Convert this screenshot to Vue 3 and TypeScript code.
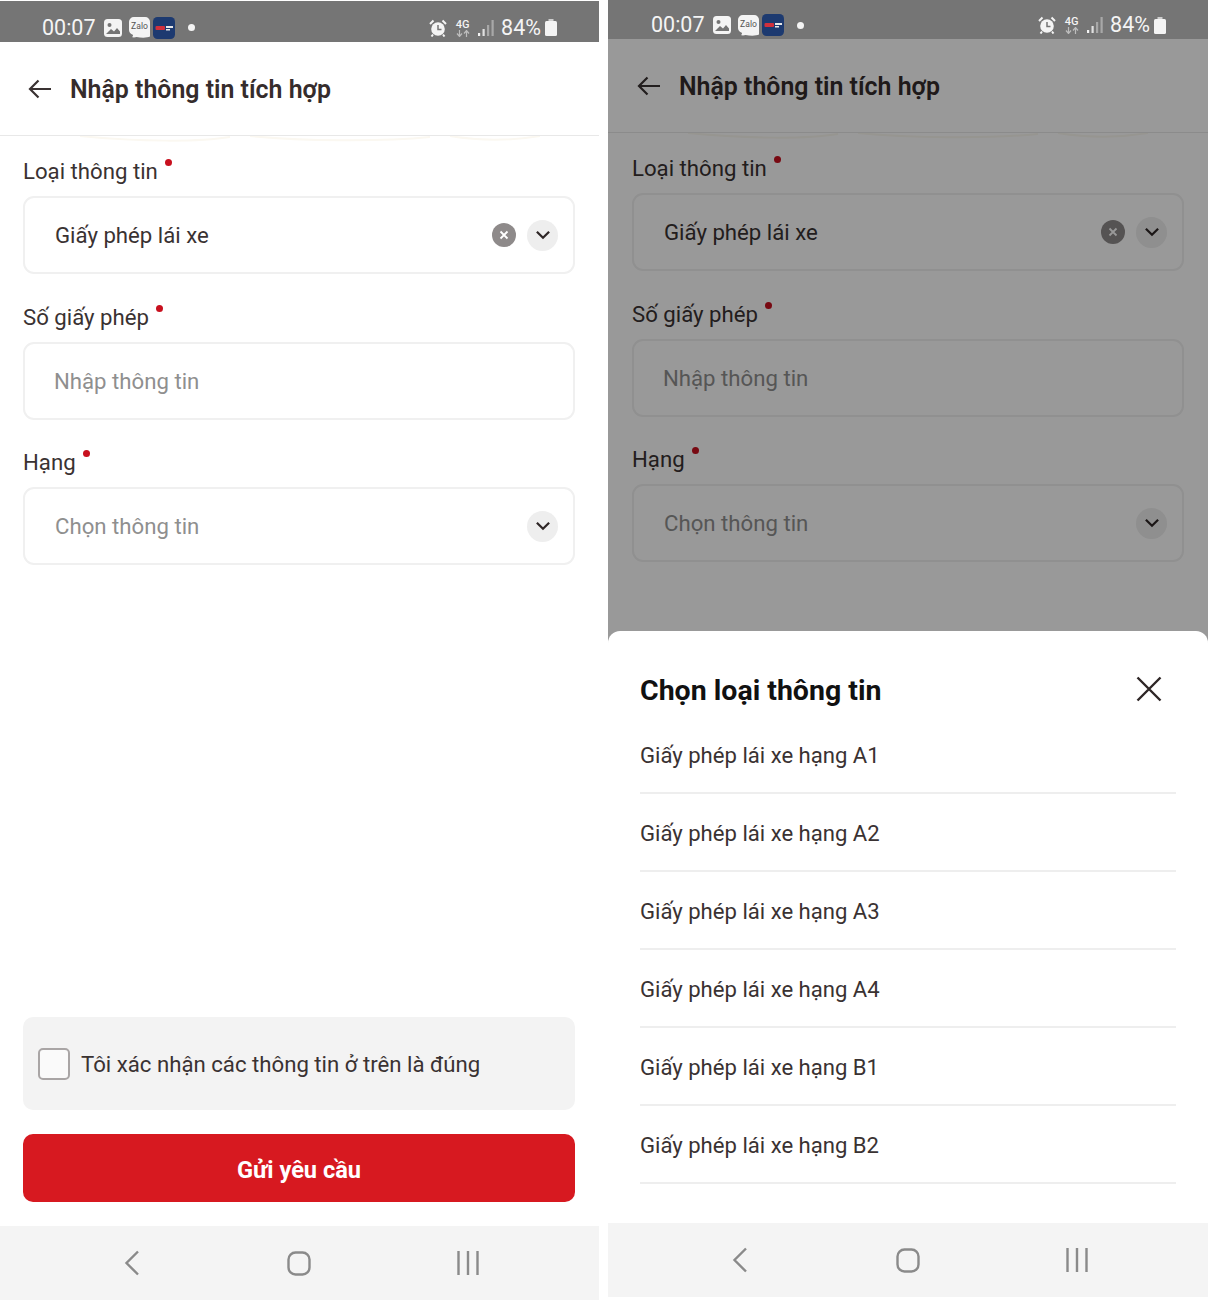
<script setup lang="ts">
const phones = [
  { id: 'form', showSheet: false },
  { id: 'sheet', showSheet: true },
]

const licenceOptions = ['A1', 'A2', 'A3', 'A4', 'B1', 'B2']
</script>

<template>
  <div class="page">
    <div
      v-for="phone in phones"
      :key="phone.id"
      class="phone"
      :class="{ '_with-sheet': phone.showSheet }"
    >
      <div class="status">
        <div class="status__side">
          <span class="status__time">00:07</span>
          <svg class="status__gallery" viewBox="0 0 18 18">
            <rect x="0" y="0" width="18" height="18" rx="3.5" fill="#f4f4f4" />
            <circle cx="5.5" cy="6" r="2" fill="#757575" />
            <path d="M2 15l5-5 3 2.5 3-3.5 3 3.5V15z" fill="#757575" />
          </svg>
          <svg class="status__zalo" viewBox="0 0 22 22">
            <path d="M5 0h12a5 5 0 0 1 5 5v15.500c-3 1.500-9 1.500-14 .5-2 .5-4 .5-5 0 1-.5 1.500-1.500 1-2.500A5 5 0 0 1 0 14V5a5 5 0 0 1 5-5z" fill="#f4f4f4" />
            <text x="11" y="13" class="status__zalo-text" text-anchor="middle">Zalo</text>
          </svg>
          <svg class="status__app" viewBox="0 0 22 22">
            <rect width="22" height="22" rx="4.5" fill="#1d3a70" />
            <rect x="2.500" y="9" width="9.500" height="4" rx="1" fill="#d1303c" />
            <rect x="13" y="9" width="7" height="2" fill="#e8e8e8" />
            <rect x="13" y="12" width="4" height="1.500" fill="#e8e8e8" />
          </svg>
          <span class="status__dot"></span>
        </div>
        <div class="status__side">
          <svg class="status__alarm" viewBox="0 0 18 18">
            <circle cx="9" cy="10" r="6.800" fill="#f4f4f4" />
            <path d="M9 6v4.500h3.500" fill="none" stroke="#757575" stroke-width="1.500" />
            <path d="M1 5l3.500-3.500M17 5l-3.500-3.500M4 15.500l-1.500 2M14 15.500l1.500 2" stroke="#f4f4f4" stroke-width="2" />
          </svg>
          <div class="status__network">
            <span>4G</span>
            <svg viewBox="0 0 14 7">
              <path d="M3.500 0v6M1 3.500L3.500 6.500 6 3.500" fill="none" stroke="#bdbdbd" stroke-width="1.200" />
              <path d="M10.500 7V1M8 3.500L10.500.5 13 3.500" fill="none" stroke="#bdbdbd" stroke-width="1.200" />
            </svg>
          </div>
          <svg class="status__signal" viewBox="0 0 16 16">
            <rect x="0" y="13" width="2.200" height="3" fill="#f4f4f4" />
            <rect x="4.500" y="9" width="2.200" height="7" fill="#e0e0e0" />
            <rect x="9" y="5" width="2.200" height="11" fill="#a8a8a8" />
            <rect x="13.500" y="0" width="2.200" height="16" fill="#a8a8a8" />
          </svg>
          <span class="status__percent">84%</span>
          <svg class="status__battery" viewBox="0 0 12 17">
            <rect x="3.500" y="0" width="5" height="2" fill="#cfcfcf" />
            <rect x="0" y="2" width="12" height="15" rx="1.500" fill="#f4f4f4" />
          </svg>
        </div>
      </div>

      <div class="main">
        <header class="header">
          <svg class="header__back" viewBox="0 0 24 20">
            <path d="M23 10H2M10.500 1.500L2 10l8.500 8.500" fill="none" stroke="#3a3232" stroke-width="2.200" />
          </svg>
          <h1 class="header__title">Nhập thông tin tích hợp</h1>
        </header>

        <div class="content">
          <svg class="content__decor" viewBox="0 0 460 10">
            <path d="M0 0c60 6 120 6 150 1M170 0c50 5 130 6 180 1M370 0c30 5 60 5 90 0" fill="none" stroke="#fbf8f1" stroke-width="2" />
          </svg>

          <div class="form">
            <div class="field">
              <label class="field__label">Loại thông tin<i class="field__required"></i></label>
              <div class="field__box">
                <span class="field__value">Giấy phép lái xe</span>
                <span class="field__clear">
                  <svg viewBox="0 0 10 10">
                    <path d="M1.500 1.500l7 7M8.500 1.500l-7 7" stroke="#fff" stroke-width="1.800" />
                  </svg>
                </span>
                <span class="field__toggle">
                  <svg viewBox="0 0 14 9">
                    <path d="M1.500 1.500L7 7l5.500-5.500" fill="none" stroke="#2e2626" stroke-width="2" />
                  </svg>
                </span>
              </div>
            </div>
            <div class="field">
              <label class="field__label">Số giấy phép<i class="field__required"></i></label>
              <div class="field__box _input">
                <span class="field__placeholder">Nhập thông tin</span>
              </div>
            </div>
            <div class="field">
              <label class="field__label">Hạng<i class="field__required"></i></label>
              <div class="field__box">
                <span class="field__placeholder">Chọn thông tin</span>
                <span class="field__toggle">
                  <svg viewBox="0 0 14 9">
                    <path d="M1.500 1.500L7 7l5.500-5.500" fill="none" stroke="#2e2626" stroke-width="2" />
                  </svg>
                </span>
              </div>
            </div>
          </div>

          <template v-if="!phone.showSheet">
            <div class="confirm">
              <span class="confirm__check"></span>
              <span class="confirm__text">Tôi xác nhận các thông tin ở trên là đúng</span>
            </div>
            <button class="submit" type="button">Gửi yêu cầu</button>
          </template>
        </div>

        <template v-if="phone.showSheet">
          <div class="overlay"></div>
          <div class="sheet">
            <div class="sheet__head">
              <h2 class="sheet__title">Chọn loại thông tin</h2>
              <svg class="sheet__close" viewBox="0 0 26 26">
                <path d="M1.500 1.500l23 23M24.500 1.500l-23 23" stroke="#2e2626" stroke-width="2.400" />
              </svg>
            </div>
            <div v-for="option in licenceOptions" :key="option" class="sheet__item">
              Giấy phép lái xe hạng {{ option }}
            </div>
          </div>
        </template>
      </div>

      <nav class="nav">
        <svg class="nav__icon" viewBox="0 0 30 30">
          <path d="M21 3.500L9.500 15 21 26.500" fill="none" stroke="#8a8a8a" stroke-width="2.400" />
        </svg>
        <svg class="nav__icon" viewBox="0 0 30 30">
          <rect x="4.500" y="4.500" width="21" height="22" rx="7" fill="none" stroke="#8a8a8a" stroke-width="2.400" />
        </svg>
        <svg class="nav__icon" viewBox="0 0 30 30">
          <path d="M6.500 3v24M16 3v24M25.500 3v24" fill="none" stroke="#8a8a8a" stroke-width="2.400" />
        </svg>
      </nav>
    </div>
  </div>
</template>

<style scoped>
.page {
  display: flex;
  gap: 9px;
  width: 1210px;
  height: 1300px;
  background: #fff;
  font-family: Roboto, "Liberation Sans", sans-serif;
  color: #3a3232;
}

.phone {
  display: flex;
  flex-direction: column;
  width: 599px;
  height: 1299px;
  margin-top: 1px;
}

.phone._with-sheet {
  width: 600px;
  height: 1297px;
  margin-top: 0;
}

.status {
  display: flex;
  flex: none;
  justify-content: space-between;
  align-items: center;
  box-sizing: border-box;
  height: 41px;
  padding: 12px 42px 0;
  background: #757575;
  color: #f4f4f4;
}

._with-sheet .status {
  height: 39px;
  padding: 11px 42px 0 43px;
}

.status__side {
  display: flex;
  align-items: center;
}

.status__time {
  font-size: 21.5px;
  line-height: 30px;
  margin-right: 8px;
}

.status__gallery {
  width: 18px;
  height: 18px;
  margin-right: 7px;
}

.status__zalo {
  width: 21px;
  height: 21px;
  margin-right: 3px;
}

.status__zalo-text {
  font-size: 9px;
  fill: #555;
}

.status__app {
  width: 22px;
  height: 22px;
  margin-right: 13px;
}

.status__dot {
  width: 7px;
  height: 7px;
  border-radius: 50%;
  background: #f4f4f4;
}

.status__alarm {
  width: 18px;
  height: 18px;
  margin-right: 8px;
}

.status__network {
  display: flex;
  flex-direction: column;
  align-items: center;
  width: 15px;
  margin-right: 8px;
  font-size: 11px;
  font-weight: 500;
  line-height: 11px;
}

.status__network svg {
  width: 14px;
  height: 7px;
}

.status__signal {
  width: 16px;
  height: 16px;
  margin-right: 7px;
}

.status__percent {
  font-size: 21.5px;
  line-height: 30px;
  margin-right: 4px;
}

.status__battery {
  width: 12px;
  height: 17px;
}

.main {
  position: relative;
  display: flex;
  flex: 1;
  flex-direction: column;
  min-height: 0;
}

.header {
  display: flex;
  flex: none;
  align-items: center;
  box-sizing: border-box;
  height: 94px;
  padding: 0 0 0 28px;
  border-bottom: 1px solid #e8e8e8;
}

._with-sheet .header {
  padding-left: 29px;
}

.header__back {
  width: 24px;
  height: 20px;
  margin-right: 18px;
}

.header__title {
  margin: 2px 0 0;
  font-size: 24.9px;
  font-weight: 600;
  color: #352c2c;
}

.content {
  position: relative;
  display: flex;
  flex: 1;
  flex-direction: column;
  padding: 18px 24px 24px 23px;
}

._with-sheet .content {
  padding-left: 24px;
}

.content__decor {
  position: absolute;
  top: 0;
  left: 80px;
  width: 460px;
  height: 10px;
}

.form {
  display: flex;
  flex-direction: column;
  gap: 25.5px;
}

.field__label {
  display: flex;
  align-items: flex-start;
  font-size: 22.2px;
  line-height: 34px;
  height: 33px;
}

.field__required {
  width: 7px;
  height: 7px;
  margin: 5px 0 0 7px;
  border-radius: 50%;
  background: #c8101e;
}

.field__box {
  display: flex;
  align-items: center;
  box-sizing: border-box;
  height: 78px;
  margin-top: 9px;
  padding: 0 15px 0 30px;
  border: 2px solid #f0f0f0;
  border-radius: 11px;
  font-size: 22.2px;
}

.field__box._input {
  padding-left: 29px;
}

.field__value,
.field__placeholder {
  flex: 1;
}

.field__placeholder {
  color: #8f8f8f;
}

.field__clear {
  display: flex;
  justify-content: center;
  align-items: center;
  width: 24px;
  height: 24px;
  margin-right: 11px;
  border-radius: 50%;
  background: #8e8a8a;
}

.field__clear svg {
  width: 10px;
  height: 10px;
}

.field__toggle {
  display: flex;
  justify-content: center;
  align-items: center;
  width: 31px;
  height: 31px;
  border-radius: 50%;
  background: #eeeeee;
}

.field__toggle svg {
  width: 16px;
  height: 10px;
}

.confirm {
  display: flex;
  align-items: center;
  box-sizing: border-box;
  height: 93px;
  margin-top: auto;
  padding-left: 15px;
  border-radius: 10px;
  background: #f3f3f3;
}

.confirm__check {
  box-sizing: border-box;
  width: 32px;
  height: 32px;
  margin-right: 11px;
  border: 2px solid #a9a5a5;
  border-radius: 5px;
  background: #fafafa;
}

.confirm__text {
  padding-top: 1px;
  font-size: 22.2px;
}

.submit {
  flex: none;
  height: 68px;
  margin-top: 24px;
  padding: 3px 0 0;
  border: none;
  border-radius: 10px;
  background: #d71920;
  color: #fff;
  font-family: inherit;
  font-size: 23.6px;
  font-weight: 700;
}

.overlay {
  position: absolute;
  inset: 0;
  background: rgba(0, 0, 0, 0.4);
}

.sheet {
  position: absolute;
  right: 0;
  bottom: 0;
  left: 0;
  box-sizing: border-box;
  height: 592px;
  padding: 36px 32px 0;
  border-radius: 12px 12px 0 0;
  background: #fff;
}

.sheet__head {
  display: flex;
  justify-content: space-between;
  align-items: center;
  height: 45px;
  margin-bottom: 4px;
  padding-right: 14px;
}

.sheet__title {
  margin: 2px 0 0;
  font-size: 28.5px;
  font-weight: 700;
  color: #111;
}

.sheet__close {
  width: 26px;
  height: 26px;
  margin-top: -2px;
}

.sheet__item {
  display: flex;
  align-items: center;
  box-sizing: border-box;
  height: 78px;
  padding-top: 2px;
  border-bottom: 2px solid #eeeeee;
  font-size: 22.1px;
}

.nav {
  display: grid;
  flex: none;
  grid-template-columns: repeat(3, 1fr);
  justify-items: center;
  align-items: center;
  height: 74px;
  padding: 0 48px;
  background: #f4f4f4;
}

.nav__icon {
  width: 30px;
  height: 30px;
}
</style>
